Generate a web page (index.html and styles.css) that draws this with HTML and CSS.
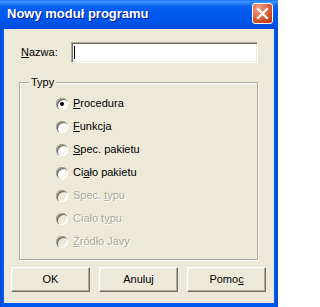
FILE: index.html
```html
<!DOCTYPE html>
<html lang="pl">
<head>
<meta charset="utf-8">
<title>Nowy moduł programu</title>
<link rel="stylesheet" href="styles.css">
</head>
<body>
<div class="window">
  <div class="titlebar">
    <span class="title">Nowy moduł programu</span>
    <span class="close">
      <svg width="19" height="19" viewBox="0 0 19 19"><path d="M5 5 L14 14 M14 5 L5 14" stroke="#fff" stroke-width="2.2" stroke-linecap="square"/></svg>
    </span>
  </div>
  <div class="client">
    <div class="name-row">
      <span class="name-label"><u>N</u>azwa:</span>
      <span class="textbox"><span class="caret"></span></span>
    </div>
    <div class="group">
      <span class="legend">Typy</span>
      <div class="option"><span class="radio checked"></span><span class="opt-label"><u>P</u>rocedura</span></div>
      <div class="option"><span class="radio"></span><span class="opt-label"><u>F</u>unkcja</span></div>
      <div class="option"><span class="radio"></span><span class="opt-label"><u>S</u>pec. pakietu</span></div>
      <div class="option"><span class="radio"></span><span class="opt-label">Ci<u>a</u>ło pakietu</span></div>
      <div class="option disabled"><span class="radio"></span><span class="opt-label">Spec. <u>t</u>ypu</span></div>
      <div class="option disabled"><span class="radio"></span><span class="opt-label">Ciało t<u>y</u>pu</span></div>
      <div class="option disabled"><span class="radio"></span><span class="opt-label"><u>Ź</u>ródło Javy</span></div>
    </div>
    <div class="buttons">
      <span class="button">OK</span>
      <span class="button">Anuluj</span>
      <span class="button">Pomo<u>c</u></span>
    </div>
  </div>
</div>
</body>
</html>
```

FILE: styles.css
```css
html, body {
  margin: 0;
  padding: 0;
  background: #fff;
}

.window {
  width: 278px;
  height: 307px;
  display: flex;
  flex-direction: column;
  background: linear-gradient(90deg, #0842D6 0, #0058EE 2px, #0058EE 276px, #0842D6 278px);
  font-family: "Liberation Sans", Arial, sans-serif;
  font-size: 11px;
  color: #000;
}

.titlebar {
  height: 29px;
  flex: none;
  display: flex;
  justify-content: space-between;
  align-items: flex-start;
  padding: 0 5px 0 7px;
  background: linear-gradient(180deg, #0A5FE9 0, #3D95FF 1px, #2F86F9 3px, #0A63F0 6px, #0058EE 12px, #0056EB 20px, #0050E2 26px, #0049D6 29px);
}

.title {
  margin-top: 6px;
  font-size: 13px;
  line-height: 16px;
  font-weight: bold;
  color: #fff;
  text-shadow: 1px 1px 0 #0A1E8A;
  white-space: nowrap;
}

.close {
  margin-top: 3px;
  width: 21px;
  height: 21px;
  box-sizing: border-box;
  border: 1px solid #fff;
  border-radius: 3px;
  background: radial-gradient(circle at 30% 25%, #F2A088 0, #E06A45 45%, #C8401A 80%, #B5330E 100%);
  display: flex;
  align-items: center;
  justify-content: center;
}

.close svg {
  display: block;
}

.client {
  flex: 1;
  margin: 0 4px 4px 4px;
  background: #ECE9D8;
  padding-top: 13px;
  display: flex;
  flex-direction: column;
}

.name-row {
  display: flex;
  align-items: center;
  margin-left: 17px;
  height: 21px;
}

.name-label {
  width: 50px;
  line-height: 13px;
}

.textbox {
  width: 187px;
  height: 21px;
  box-sizing: border-box;
  background: #fff;
  border: 1px solid;
  border-color: #ACA899 #fff #fff #ACA899;
  box-shadow: inset 1px 1px 0 #716F64, inset -1px -1px 0 #F1EFE2;
  display: flex;
  align-items: center;
  padding-left: 2px;
}

.caret {
  width: 1px;
  height: 13px;
  background: #000;
}

.group {
  position: relative;
  margin: 19px 16px 0 15px;
  border: 1px solid #ACA899;
  box-shadow: inset 1px 1px 0 #fff, 1px 1px 0 #fff;
  padding: 9px 0 6px 36px;
}

.legend {
  position: absolute;
  top: -7px;
  left: 9px;
  padding: 0 2px;
  line-height: 13px;
  background: #ECE9D8;
}

.option {
  height: 23px;
  display: flex;
  align-items: center;
}

.radio {
  width: 12px;
  height: 12px;
  flex: none;
  border-radius: 50%;
  background: #fff;
  box-shadow: inset 1px 1px 0 #ACA899, inset 2px 2px 0 #716F64, inset -1px -1px 0 #fff, inset -2px -2px 0 #F1EFE2;
  display: flex;
  align-items: center;
  justify-content: center;
}

.radio.checked::after {
  content: "";
  width: 4px;
  height: 4px;
  border-radius: 50%;
  background: #000;
}

.opt-label {
  margin-left: 5px;
  line-height: 13px;
  white-space: nowrap;
}

.option.disabled .radio {
  background: #ECE9D8;
}

.option.disabled .opt-label {
  color: #ACA899;
  text-shadow: 1px 1px 0 #fff;
}

.buttons {
  display: flex;
  gap: 9px;
  margin: 7px 0 0 7px;
}

.button {
  width: 79px;
  height: 25px;
  box-sizing: border-box;
  border: 1px solid;
  border-color: #fff #716F64 #716F64 #fff;
  box-shadow: inset -1px -1px 0 #ACA899, inset 1px 1px 0 #F1EFE2;
  background: #ECE9D8;
  display: flex;
  align-items: center;
  justify-content: center;
  line-height: 13px;
}
```
